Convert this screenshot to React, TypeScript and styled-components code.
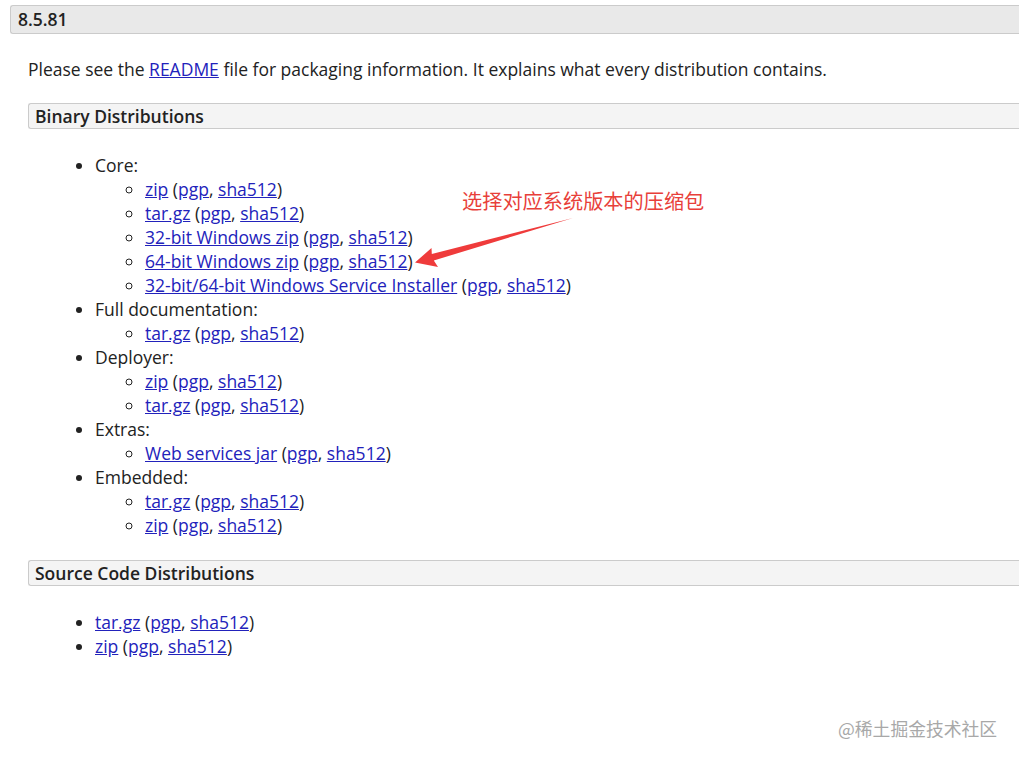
import styled, { createGlobalStyle } from "styled-components";

const GlobalStyle = createGlobalStyle`
  html, body {
    margin: 0;
    padding: 0;
    background: #fff;
    overflow: hidden;
  }
  body {
    font-family: "Open Sans", "Noto Sans CJK SC", sans-serif;
    color: #222;
  }
`;

type Sub = { label: string };
type Group = { title: string; items: Sub[] };

const binary: Group[] = [
  {
    title: "Core:",
    items: [
      { label: "zip" },
      { label: "tar.gz" },
      { label: "32-bit Windows zip" },
      { label: "64-bit Windows zip" },
      { label: "32-bit/64-bit Windows Service Installer" },
    ],
  },
  { title: "Full documentation:", items: [{ label: "tar.gz" }] },
  { title: "Deployer:", items: [{ label: "zip" }, { label: "tar.gz" }] },
  { title: "Extras:", items: [{ label: "Web services jar" }] },
  { title: "Embedded:", items: [{ label: "tar.gz" }, { label: "zip" }] },
];

const source: Sub[] = [{ label: "tar.gz" }, { label: "zip" }];

// Ссылка на файл вместе с подписями (pgp, sha512)
function FileLink({ label }: Sub) {
  return (
    <>
      <Link href="#">{label}</Link> (<Link href="#">pgp</Link>, <Link href="#">sha512</Link>)
    </>
  );
}

export default function App() {
  return (
    <>
      <GlobalStyle />
      <Page>
        <VersionHeader>8.5.81</VersionHeader>
        <Section>
          <Intro>
            Please see the <Link href="#">README</Link> file for packaging information. It explains
            what every distribution contains.
          </Intro>

          <SubHeader>Binary Distributions</SubHeader>
          <List>
            {binary.map((g) => (
              <li key={g.title}>
                {g.title}
                <SubList>
                  {g.items.map((s, i) => (
                    <li key={i}>
                      <FileLink label={s.label} />
                    </li>
                  ))}
                </SubList>
              </li>
            ))}
          </List>

          <SubHeader>Source Code Distributions</SubHeader>
          <List>
            {source.map((s, i) => (
              <li key={i}>
                <FileLink label={s.label} />
              </li>
            ))}
          </List>
        </Section>

        {/* Пометка поверх страницы */}
        <Note>选择对应系统版本的压缩包</Note>
        <Arrow width="170" height="60" viewBox="0 0 170 60">
          <polygon
            points="5,50.5 21.5,36 21.8,42 163,6 23.8,48.5 28,55"
            fill="#ef3b3b"
          />
        </Arrow>

        <Watermark>@稀土掘金技术社区</Watermark>
      </Page>
    </>
  );
}

const Page = styled.div`
  position: relative;
  width: 100%;
  height: 760px;
  box-sizing: border-box;
  padding: 5px 0 0 10px;
  font-size: 17.5px;
  line-height: 24px;
`;

// Заголовки уходят за правый край кадра, поэтому правой рамки нет
const VersionHeader = styled.h3`
  margin: 0;
  padding: 0 7px;
  font-size: 17.5px;
  font-weight: 600;
  line-height: 27px;
  background: #e9e9e9;
  border: 1px solid #cbcbcb;
  border-right: none;
  border-radius: 3px 0 0 3px;
`;

const Section = styled.div`
  margin-left: 18px;
`;

const Intro = styled.p`
  margin: 23px 0 22px 0;
`;

const SubHeader = styled.h4`
  margin: 23px 0 0 0;
  padding: 0 6px;
  font-size: 17.5px;
  font-weight: 600;
  line-height: 24px;
  background: #f4f4f4;
  border: 1px solid #cbcbcb;
  border-right: none;
  border-radius: 3px 0 0 3px;

  ${Intro} + & {
    margin-top: 0;
  }
`;

const List = styled.ul`
  margin: 24px 0 0 0;
  padding-left: 67px;
  list-style: disc;
`;

const SubList = styled.ul`
  margin: 0;
  padding-left: 50px;
  list-style: circle;
`;

const Link = styled.a`
  color: #2222bb;
  text-decoration: underline;
`;

const Note = styled.div`
  position: absolute;
  left: 462px;
  top: 189px;
  font-family: "Noto Sans CJK SC", sans-serif;
  font-size: 20.2px;
  line-height: 24px;
  color: #e83f3a;
`;

const Arrow = styled.svg`
  position: absolute;
  left: 410px;
  top: 212px;
`;

const Watermark = styled.div`
  position: absolute;
  left: 838px;
  top: 717px;
  font-family: "Noto Sans CJK SC", sans-serif;
  font-size: 17.8px;
  line-height: 22px;
  color: #a8a8a8;
`;
